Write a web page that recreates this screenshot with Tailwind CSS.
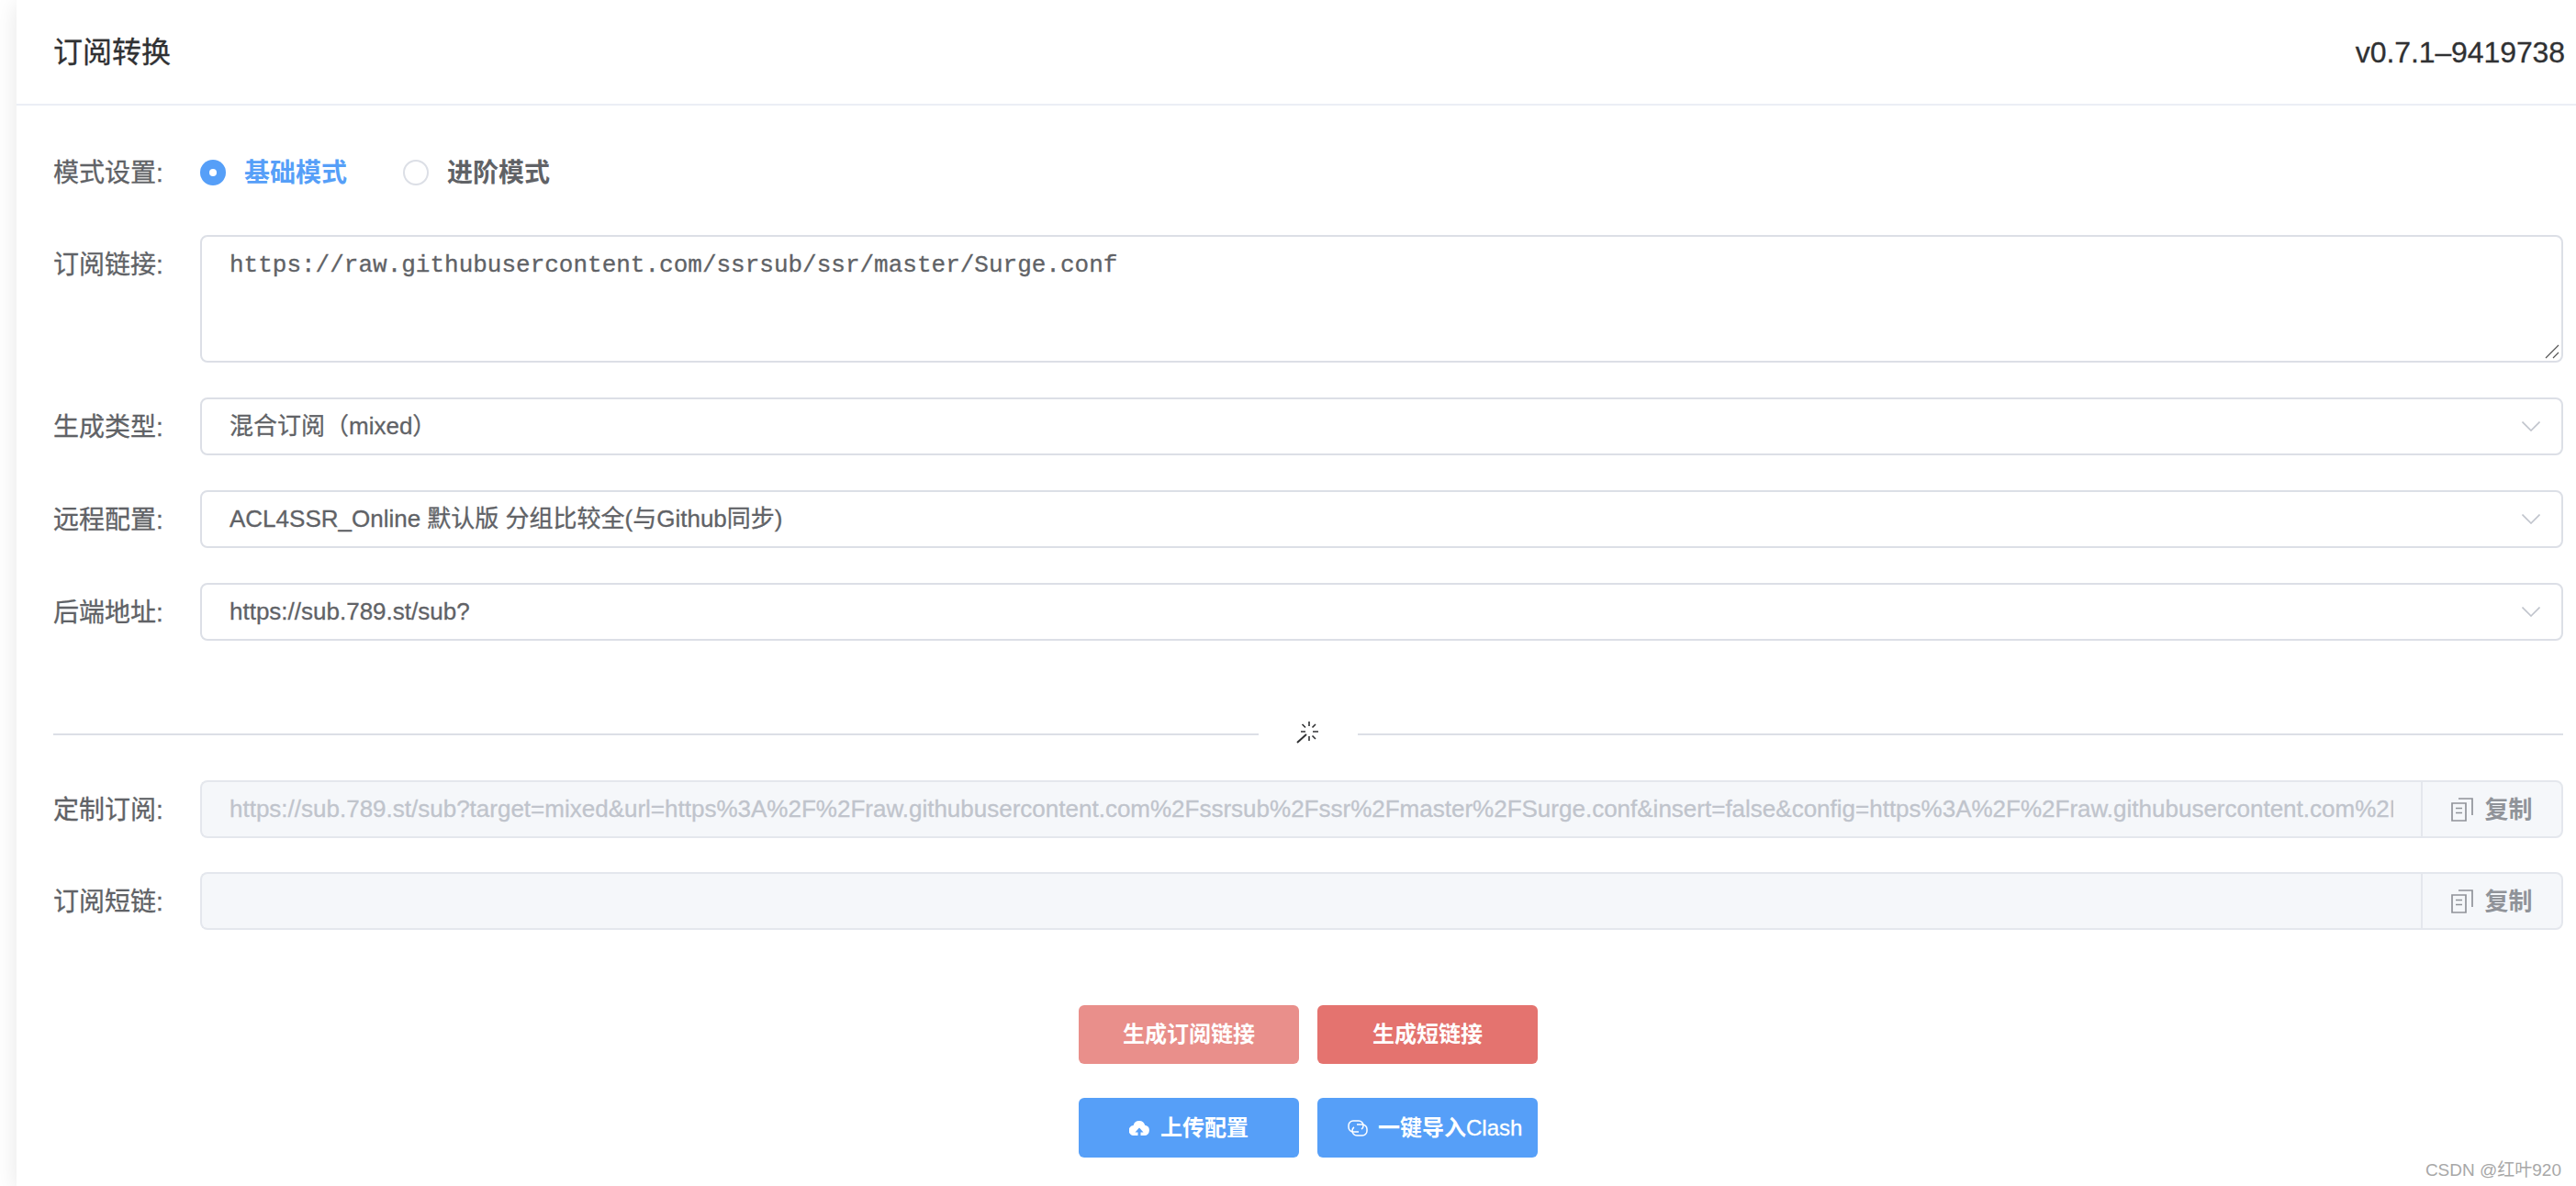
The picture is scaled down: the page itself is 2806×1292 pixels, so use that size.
<!DOCTYPE html>
<html lang="zh">
<head>
<meta charset="utf-8">
<script src="https://cdn.jsdelivr.net/npm/@tailwindcss/browser@4"></script>
<title>订阅转换</title>
</head>
<body class="bg-white font-['Liberation_Sans','Noto_Sans_CJK_SC',sans-serif] text-[#606266]">
<div class="relative w-[2806px] h-[1292px] overflow-hidden bg-white">
  <div class="ml-[18px] h-full shadow-[0_4px_24px_0_rgba(0,0,0,0.1)]">
    <header class="h-[115px] border-b-2 border-[#ebeef5] pl-[40px] pr-[12px] flex items-center justify-between text-[32px] text-[#303133] [-webkit-text-stroke:0.3px]">
      <span>订阅转换</span>
      <span class="tracking-[-0.1px]">v0.7.1–9419738</span>
    </header>

    <main class="pl-[40px] pr-[14px] [-webkit-text-stroke:0.3px]">
      <div class="flex items-center h-[56px] mt-[45px] text-[28px]">
        <label class="w-[160px] shrink-0 pt-[2px]">模式设置:</label>
        <span class="w-[28px] h-[28px] rounded-full bg-[#569ff8] flex items-center justify-center"><span class="w-[8px] h-[8px] rounded-full bg-white"></span></span>
        <span class="ml-[20px] pt-[2px] font-bold text-[#569ff8] [-webkit-text-stroke:0]">基础模式</span>
        <span class="ml-[61px] w-[28px] h-[28px] rounded-full border-2 border-[#dcdfe6] bg-white"></span>
        <span class="ml-[20px] pt-[2px] font-bold [-webkit-text-stroke:0]">进阶模式</span>
      </div>

      <div class="flex mt-[40px]">
        <label class="w-[160px] shrink-0 text-[28px] leading-[66px]">订阅链接:</label>
        <div class="relative grow h-[139px] border-2 border-[#dcdfe6] rounded-[8px] px-[30px] pt-[13px] font-['Liberation_Mono',monospace] text-[26px] leading-[36px]">
          https://raw.githubusercontent.com/ssrsub/ssr/master/Surge.conf
          <svg class="absolute right-[2px] bottom-[2px]" width="16" height="16" viewBox="0 0 16 16" fill="none" stroke="#555" stroke-width="1.2"><path d="M1 15 15 1M9 15l6-6"/></svg>
        </div>
      </div>

      <div class="flex items-center mt-[38px]">
        <label class="w-[160px] shrink-0 text-[28px] pt-[2px]">生成类型:</label>
        <div class="grow h-[63px] border-2 border-[#dcdfe6] rounded-[8px] pl-[30px] pr-[23px] flex items-center justify-between text-[26px]">
          <span>混合订阅（mixed）</span>
          <svg width="20" height="11" viewBox="0 0 20 11" fill="none" stroke="#c0c4cc" stroke-width="1.6"><path d="m.5.5 9.500 9.500 9.500-9.500"/></svg>
        </div>
      </div>

      <div class="flex items-center mt-[38px]">
        <label class="w-[160px] shrink-0 text-[28px] pt-[2px]">远程配置:</label>
        <div class="grow h-[63px] border-2 border-[#dcdfe6] rounded-[8px] pl-[30px] pr-[23px] flex items-center justify-between text-[26px]">
          <span>ACL4SSR_Online 默认版 分组比较全(与Github同步)</span>
          <svg width="20" height="11" viewBox="0 0 20 11" fill="none" stroke="#c0c4cc" stroke-width="1.6"><path d="m.5.5 9.500 9.500 9.500-9.500"/></svg>
        </div>
      </div>

      <div class="flex items-center mt-[38px]">
        <label class="w-[160px] shrink-0 text-[28px] pt-[2px]">后端地址:</label>
        <div class="grow h-[63px] border-2 border-[#dcdfe6] rounded-[8px] pl-[30px] pr-[23px] flex items-center justify-between text-[26px]">
          <span>https://sub.789.st/sub?</span>
          <svg width="20" height="11" viewBox="0 0 20 11" fill="none" stroke="#c0c4cc" stroke-width="1.6"><path d="m.5.5 9.500 9.500 9.500-9.500"/></svg>
        </div>
      </div>

      <div class="flex items-center mt-[86px] h-[32px]">
        <div class="h-[2px] grow bg-[#dcdfe6]"></div>
        <div class="w-[108px] h-[32px] flex justify-center items-center">
          <svg class="shrink-0 -mt-[4px]" width="40" height="40" viewBox="0 0 40 40" fill="none" stroke="#303133" stroke-width="1.6"><path d="M8 31 18 22" stroke-width="2"/><path d="M21 8v5M21 24v5M12 19h5M25 19h6M13.500 11l3.500 3.500M28 11l-3.500 3.500M24.500 23.500 28 27"/></svg>
        </div>
        <div class="h-[2px] grow bg-[#dcdfe6]"></div>
      </div>

      <div class="flex items-center mt-[34px]">
        <label class="w-[160px] shrink-0 text-[28px] pt-[2px]">定制订阅:</label>
        <div class="grow min-w-0 h-[63px] flex text-[26px]">
          <div class="grow min-w-0 bg-[#f5f7fa] border-2 border-r-0 border-[#e4e7ed] rounded-l-[8px] pl-[30px] pr-[30px] flex items-center text-[#c0c4cc]">
            <span class="block w-full overflow-hidden whitespace-nowrap">https://sub.789.st/sub?target=mixed&amp;url=https%3A%2F%2Fraw.githubusercontent.com%2Fssrsub%2Fssr%2Fmaster%2FSurge.conf&amp;insert=false&amp;config=https%3A%2F%2Fraw.githubusercontent.com%2FACL4SSR%2FACL4SSR</span>
          </div>
          <div class="w-[155px] shrink-0 bg-[#f5f7fa] border-2 border-[#e4e7ed] rounded-r-[8px] flex items-center justify-center gap-[12px] text-[#909399]">
            <svg width="24" height="26" viewBox="0 0 24 26" fill="none" stroke="#909399" stroke-width="1.7"><path d="M1 6h15v19H1zM8 1h15v18M5 11.500h7M5 16.500h7"/></svg>
            <span class="pt-[2px] font-bold [-webkit-text-stroke:0]">复制</span>
          </div>
        </div>
      </div>

      <div class="flex items-center mt-[37px]">
        <label class="w-[160px] shrink-0 text-[28px] pt-[2px]">订阅短链:</label>
        <div class="grow min-w-0 h-[63px] flex text-[26px]">
          <div class="grow min-w-0 bg-[#f5f7fa] border-2 border-r-0 border-[#e4e7ed] rounded-l-[8px]"></div>
          <div class="w-[155px] shrink-0 bg-[#f5f7fa] border-2 border-[#e4e7ed] rounded-r-[8px] flex items-center justify-center gap-[12px] text-[#909399]">
            <svg width="24" height="26" viewBox="0 0 24 26" fill="none" stroke="#909399" stroke-width="1.7"><path d="M1 6h15v19H1zM8 1h15v18M5 11.500h7M5 16.500h7"/></svg>
            <span class="pt-[2px] font-bold [-webkit-text-stroke:0]">复制</span>
          </div>
        </div>
      </div>

      <div class="flex justify-center gap-[20px] mt-[82px] text-[24px] font-bold text-white [-webkit-text-stroke:0]">
        <div class="w-[240px] h-[64px] rounded-[6px] bg-[#e98f8b] flex items-center justify-center">生成订阅链接</div>
        <div class="w-[240px] h-[64px] rounded-[6px] bg-[#e4736f] flex items-center justify-center">生成短链接</div>
      </div>
      <div class="flex justify-center gap-[20px] mt-[37px] text-[24px] font-bold text-white [-webkit-text-stroke:0]">
        <div class="w-[240px] h-[65px] rounded-[6px] bg-[#569ff8] flex items-center justify-center gap-[12px]">
          <svg width="22" height="16" viewBox="0 0 22 16"><path fill="#fff" d="M11 0a6.500 6.500 0 0 1 6.200 4.700A5.700 5.700 0 0 1 16.500 16H5.500A5.500 5.500 0 0 1 4.600 5 6.500 6.500 0 0 1 11 0Z"/><path fill="#569ff8" d="M11 7.500 15.500 12.500H12.500V16H9.500V12.500H6.500Z"/></svg>
          <span>上传配置</span>
        </div>
        <div class="w-[240px] h-[65px] rounded-[6px] bg-[#569ff8] flex items-center pl-[33px] gap-[11px]">
          <svg class="shrink-0" width="22" height="18" viewBox="0 0 22 18" fill="none" stroke="#fff" stroke-width="1.500"><path d="M12 13H6A5 5 0 0 1 1 8V6A5 5 0 0 1 6 1h6a5 5 0 0 1 5 5v.5a4 4 0 0 1-2 3.500"/><path d="M10 5h6a5 5 0 0 1 5 5v2a5 5 0 0 1-5 5h-6a5 5 0 0 1-5-5v-.5a4 4 0 0 1 2-3.500"/></svg>
          <span class="whitespace-nowrap">一键导入<span class="font-normal [-webkit-text-stroke:0.3px]">Clash</span></span>
        </div>
      </div>
    </main>
  </div>
  <div class="absolute right-[16px] bottom-[3px] text-[19px] text-[#a8a8a8]">CSDN @红叶920</div>
</div>
</body>
</html>
